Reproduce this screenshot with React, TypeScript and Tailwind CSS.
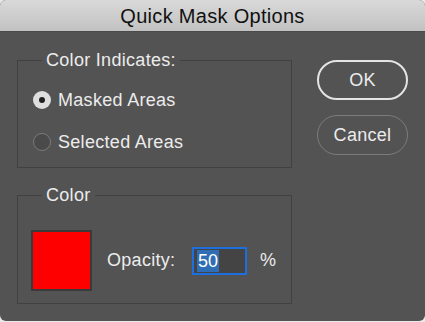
const font = { fontFamily: '"Liberation Sans", Arial, sans-serif' };
const label = "text-[18px] text-[#ececec] tracking-[0.3px]";

function Radio({ checked, text }: { checked: boolean; text: string }) {
  return (
    <div className="flex items-center h-[24px]">
      {checked ? (
        <span className="flex items-center justify-center w-[18px] h-[18px] rounded-full bg-[#dedede] ml-[15px]">
          <span className="block w-[6px] h-[6px] rounded-full bg-[#202020]" />
        </span>
      ) : (
        <span className="block w-[18px] h-[18px] rounded-full border-[1.5px] border-[#7b7b7b] bg-[#4a4a4a] ml-[15px]" />
      )}
      <span className={"ml-[7px] " + label}>{text}</span>
    </div>
  );
}

export default function App() {
  return (
    <div className="w-[425px] h-[322px] bg-[#e9e9e9]" style={font}>
      <div className="w-[425px] h-[321px] rounded-[6px] overflow-hidden bg-[#535353] flex flex-col">
        <div className="h-[32px] shrink-0 bg-gradient-to-b from-[#d9d9d9] to-[#c2c2c2] flex items-center justify-center border-b border-[#4a4a4a]">
          <span className="text-[20px] text-[#111] leading-none tracking-[0.3px]">Quick Mask Options</span>
        </div>

        <div className="flex pl-[17px] pt-[18px]">
          <div className="w-[275px] flex flex-col gap-[17px]">
            <fieldset className="border border-[#414141] pl-0 pt-[18px] pb-[14px] h-[118px]">
              <legend className={"ml-[24px] px-[4px] leading-[20px] " + label}>Color Indicates:</legend>
              <div className="flex flex-col gap-[18px]">
                <Radio checked text="Masked Areas" />
                <Radio checked={false} text="Selected Areas" />
              </div>
            </fieldset>

            <fieldset className="border border-[#414141] h-[119px] pt-[25px] pl-[13px]">
              <legend className={"ml-[11px] px-[4px] leading-[20px] " + label}>Color</legend>
              <div className="flex items-center">
                <div className="w-[61px] h-[61px] bg-[#ff0000] border-2 border-[#3a3a3a] shrink-0" />
                <span className={"ml-[15px] w-[85px] " + label}>Opacity:</span>
                <div className="w-[55px] h-[28px] border-2 border-[#1d6fe0] bg-[#444] flex items-center pl-[3px]">
                  <span className="bg-[#2f6db4] text-white text-[18px] leading-[22px] px-[1px]">50</span>
                </div>
                <span className={"ml-[13px] " + label}>%</span>
              </div>
            </fieldset>
          </div>

          <div className="ml-[25px] mt-[10px] flex flex-col gap-[15px]">
            <button className={"w-[91px] h-[40px] rounded-full border-2 border-[#e4e4e4] " + label}>OK</button>
            <button className={"w-[91px] h-[40px] rounded-full border-[1.5px] border-[#7c7c7c] " + label}>Cancel</button>
          </div>
        </div>
      </div>
    </div>
  );
}
